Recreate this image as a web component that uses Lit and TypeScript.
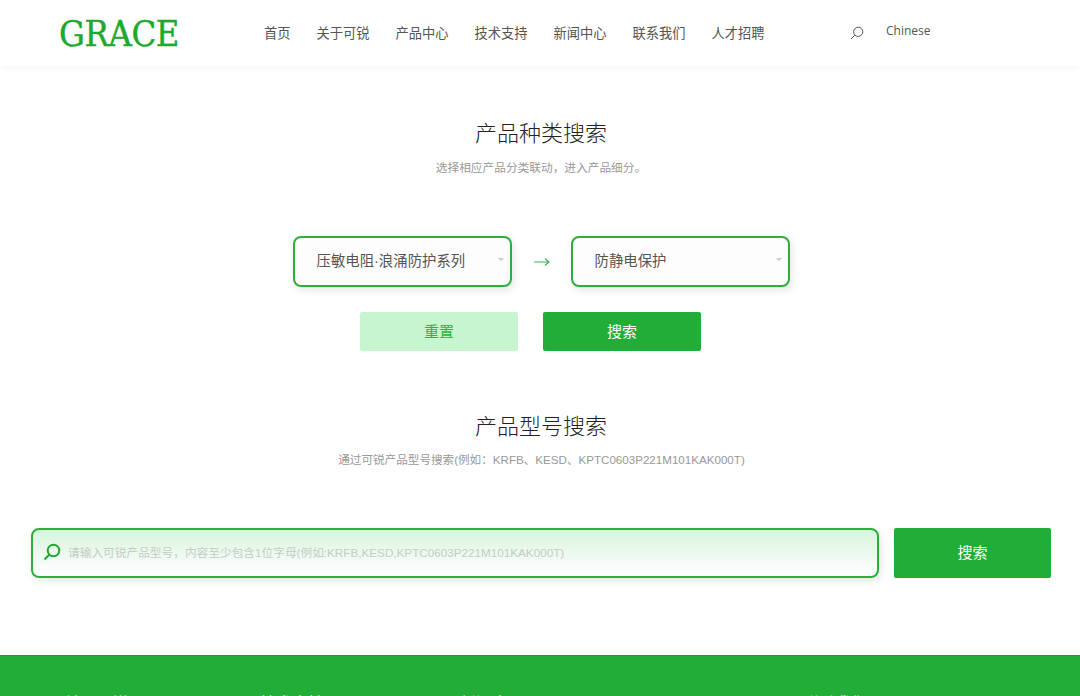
import { LitElement, html, css } from "lit";
import { customElement } from "lit/decorators.js";

const NAV = ["首页", "关于可锐", "产品中心", "技术支持", "新闻中心", "联系我们", "人才招聘"];
const FOOT = ["关于可锐", "技术支持", "新闻中心", "联系我们"];

@customElement("app-root")
export class AppRoot extends LitElement {
  static styles = css`
    :host {
      display: block;
      height: 696px;
      overflow: hidden;
      background: #fff;
      font-family: "Liberation Sans", "Noto Sans CJK SC", sans-serif;
      color: #333;
    }
    header {
      height: 66px;
      display: flex;
      align-items: center;
      box-shadow: 0 1px 6px rgba(0, 0, 0, 0.06);
      position: relative;
    }
    .logo {
      font-family: "DejaVu Serif", serif;
      font-stretch: condensed;
      font-size: 36px;
      color: #1ea82f;
      margin-left: 59px;
      width: 205px;
      letter-spacing: -0.4px;
      -webkit-text-stroke: 0.4px #1ea82f;
    }
    nav {
      display: flex;
      gap: 26px;
      font-size: 13.25px;
      color: #555;
      width: 586px;
      margin-top: -2px;
    }
    .search-ic {
      width: 14px;
      height: 14px;
    }
    .lang {
      font-family: "Open Sans", sans-serif;
      font-size: 12px;
      color: #555;
      margin-left: 22px;
      margin-top: -6px;
    }
    h2 {
      font-size: 22px;
      font-weight: 300;
      margin: 0;
      text-align: center;
      color: #222;
      line-height: 32px;
      padding-left: 2px;
    }
    .sub {
      font-size: 11.7px;
      color: #999;
      text-align: center;
      line-height: 18px;
      margin-top: 9px;
      padding-left: 2px;
    }
    .s1 {
      padding-top: 52px;
    }
    .selects {
      display: flex;
      justify-content: center;
      align-items: center;
      margin-top: 59px;
      margin-left: 2px;
    }
    .sel {
      width: 219px;
      height: 51px;
      box-sizing: border-box;
      border: 2px solid #2fae40;
      border-radius: 8px;
      background: #fdfdfd;
      box-shadow: 2px 3px 8px rgba(0, 0, 0, 0.1);
      display: flex;
      align-items: center;
      justify-content: space-between;
      padding: 0 6px 4px 22px;
      font-size: 14.4px;
      color: #555;
    }
    .caret {
      width: 0;
      height: 0;
      border-left: 3px solid transparent;
      border-right: 3px solid transparent;
      border-top: 3px solid #ccc;
    }
    .arrow {
      width: 59px;
      display: flex;
      justify-content: center;
    }
    .arrow svg {
      width: 17px;
      height: 10px;
    }
    .btns {
      display: flex;
      justify-content: center;
      gap: 25px;
      margin-top: 25px;
      margin-right: 19px;
    }
    .btn {
      width: 158px;
      height: 39px;
      padding-bottom: 3px;
      box-sizing: border-box;
      border-radius: 2px;
      display: flex;
      align-items: center;
      justify-content: center;
      font-size: 15px;
      background: #22ad38;
      color: #fff;
    }
    .btn.reset {
      background: #c6f5cf;
      color: #2fb245;
    }
    .s2 {
      padding-top: 60px;
    }
    .s2 .sub {
      margin-top: 8px;
      padding-left: 3px;
      font-size: 11.6px;
    }
    .query {
      display: flex;
      gap: 15px;
      margin: 59px 29px 0 31px;
    }
    .input {
      flex: 1;
      height: 50px;
      box-sizing: border-box;
      border: 2px solid #2fae40;
      border-radius: 8px;
      background: linear-gradient(#d9f4dd, #ffffff);
      box-shadow: 2px 3px 8px rgba(0, 0, 0, 0.1);
      display: flex;
      align-items: center;
      gap: 7px;
      padding: 0 0 4px 10px;
      font-size: 11.7px;
      color: #c6cbc7;
    }
    .input svg {
      width: 18px;
      height: 18px;
      flex: none;
      margin-top: 2px;
    }
    .query .btn {
      width: 157px;
      height: 50px;
      padding-bottom: 4px;
    }
    footer {
      margin-top: 77px;
      height: 41px;
      background: #22ad38;
      border-top: 1px solid #1c9d30;
      box-sizing: border-box;
      display: grid;
      grid-template-columns: 196px 200px 343px auto;
      padding: 38px 0 0 64px;
      font-size: 16px;
      color: #e8f6ea;
      line-height: 20px;
    }
  `;

  render() {
    return html`
      <header>
        <div class="logo">GRACE</div>
        <nav>${NAV.map((n) => html`<span>${n}</span>`)}</nav>
        <svg class="search-ic" viewBox="0 0 14 14" fill="none" stroke="#555" stroke-width="1">
          <circle cx="8.2" cy="5.8" r="4.6"></circle>
          <path d="M4.8 9.2 1 13"></path>
        </svg>
        <span class="lang">Chinese</span>
      </header>
      <section class="s1">
        <h2>产品种类搜索</h2>
        <div class="sub">选择相应产品分类联动，进入产品细分。</div>
        <div class="selects">
          <div class="sel"><span>压敏电阻·浪涌防护系列</span><i class="caret"></i></div>
          <div class="arrow">
            <svg viewBox="0 0 17 10" fill="none" stroke="#3cb650" stroke-width="1.2">
              <path d="M1 5h15M12 1.5 16 5l-4 3.5"></path>
            </svg>
          </div>
          <div class="sel"><span>防静电保护</span><i class="caret"></i></div>
        </div>
        <div class="btns">
          <div class="btn reset">重置</div>
          <div class="btn">搜索</div>
        </div>
      </section>
      <section class="s2">
        <h2>产品型号搜索</h2>
        <div class="sub">通过可锐产品型号搜索(例如：KRFB、KESD、KPTC0603P221M101KAK000T)</div>
        <div class="query">
          <div class="input">
            <svg viewBox="0 0 18 18" fill="none" stroke="#1ea82f" stroke-width="2">
              <circle cx="10.5" cy="7.5" r="5.8"></circle>
              <path d="M6.2 11.8 1.5 16.5"></path>
            </svg>
            <span>请输入可锐产品型号，内容至少包含1位字母(例如:KRFB,KESD,KPTC0603P221M101KAK000T)</span>
          </div>
          <div class="btn">搜索</div>
        </div>
      </section>
      <footer>${FOOT.map((t) => html`<span>${t}</span>`)}</footer>
    `;
  }
}
